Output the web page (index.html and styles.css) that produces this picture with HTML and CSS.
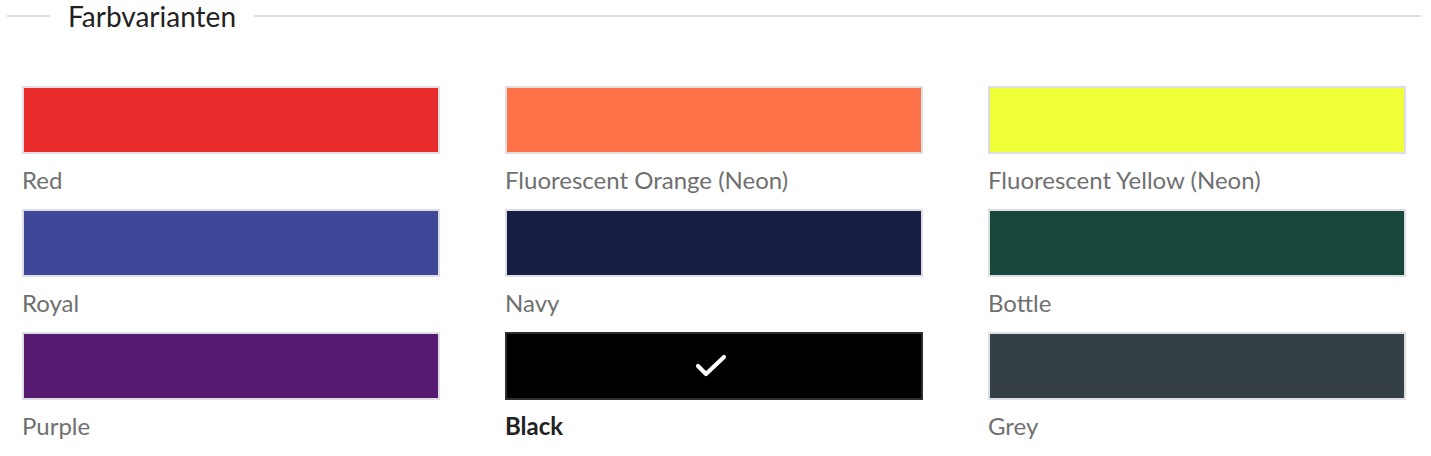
FILE: index.html
```html
<!DOCTYPE html>
<html lang="de">
<head>
<meta charset="utf-8">
<title>Farbvarianten</title>
<link rel="stylesheet" href="styles.css">
</head>
<body>
<section class="variants">
  <div class="legend"><span class="legend-line short"></span><h2 class="legend-title">Farbvarianten</h2><span class="legend-line long"></span></div>
  <div class="grid">
    <div class="item"><div class="swatch" style="background:#e82c2c"></div><div class="label">Red</div></div>
    <div class="item"><div class="swatch" style="background:#ff7148"></div><div class="label">Fluorescent Orange (Neon)</div></div>
    <div class="item"><div class="swatch" style="background:#eeff38"></div><div class="label">Fluorescent Yellow (Neon)</div></div>
    <div class="item"><div class="swatch" style="background:#3f4898"></div><div class="label">Royal</div></div>
    <div class="item"><div class="swatch" style="background:#171e45"></div><div class="label">Navy</div></div>
    <div class="item"><div class="swatch" style="background:#17463c"></div><div class="label">Bottle</div></div>
    <div class="item"><div class="swatch" style="background:#561a70"></div><div class="label">Purple</div></div>
    <div class="item selected"><div class="swatch" style="background:#000000"><svg class="check" width="32" height="24" viewBox="0 0 32 24"><path d="M3 12 L11 20 L29 3" fill="none" stroke="#fff" stroke-width="4.2" stroke-linecap="round" stroke-linejoin="round"/></svg></div><div class="label">Black</div></div>
    <div class="item"><div class="swatch" style="background:#353f46"></div><div class="label">Grey</div></div>
  </div>
</section>
</body>
</html>
```
FILE: styles.css
```css
html, body {
  margin: 0;
  padding: 0;
  background: #ffffff;
}
body {
  font-family: Lato, "Liberation Sans", sans-serif;
}
.variants {
  margin: 0 10px 0 7px;
}
.legend {
  display: flex;
  align-items: flex-start;
  height: 34px;
  gap: 18px;
}
.legend-line {
  height: 2px;
  background: #dde0e3;
  margin-top: 15px;
}
.legend-line.short {
  width: 43px;
}
.legend-line.long {
  flex: 1;
}
.legend-title {
  margin: 0;
  font-size: 28px;
  font-weight: 400;
  color: #222;
  line-height: 32px;
}
.grid {
  display: grid;
  grid-template-columns: repeat(3, 418px);
  column-gap: 65px;
  row-gap: 0;
  padding: 52px 0 0 15px;
}
.item {
  height: 123px;
}
.swatch {
  box-sizing: border-box;
  height: 68px;
  border: 2px solid #dcdee2;
  display: flex;
  align-items: center;
  justify-content: center;
}
.selected .swatch {
  border-color: #2b2f30;
}
.check {
  display: block;
  margin-left: -6px;
}
.label {
  margin-top: 9px;
  font-size: 24px;
  line-height: 34px;
  color: #707070;
}
.selected .label {
  font-weight: 700;
  color: #222;
}
```
